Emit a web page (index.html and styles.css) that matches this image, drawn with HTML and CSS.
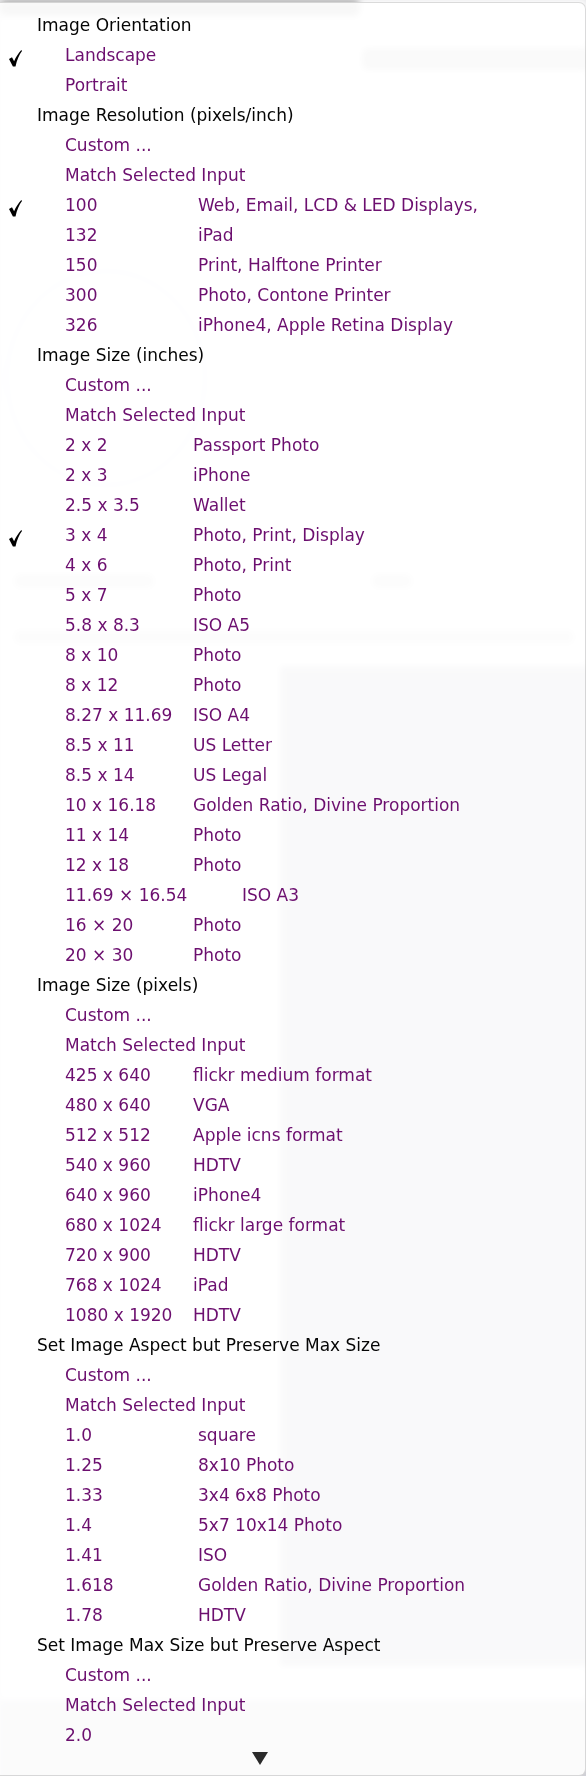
FILE: index.html
```html
<!DOCTYPE html>
<html lang="en">
<head>
    <meta charset="UTF-8" />
    <title>Image Size Menu</title>
    <link rel="stylesheet" href="styles.css">
</head>
<body>
    <!-- blurred window behind the menu -->
    <div class="backdrop">
        <div class="blob blob-bar"></div>
        <div class="blob blob-title"></div>
        <div class="ghost-circle"></div>
        <div class="ghost-button"></div>
        <div class="blob blob-back"></div>
        <div class="blob blob-fade"></div>
        <div class="blob blob-format"></div>
        <div class="ghost-panel"></div>
        <div class="ghost-foot"></div>
    </div>

    <div class="menu">
        <div class="row head">Image Orientation</div>
        <div class="section">
            <div class="row item"><span class="mark"><svg class="check" viewBox="0 0 13 17"><path d="M0 9 L3 7.2 L5.1 11.2 C7 7 9.4 3 12.3 0 L13 1 C10.2 4.8 7.9 9.8 6.5 16.6 L3.9 16.6 Z"/></svg></span><span class="c1">Landscape</span></div>
            <div class="row item"><span class="mark"></span><span class="c1">Portrait</span></div>
        </div>

        <div class="row head">Image Resolution (pixels/inch)</div>
        <div class="section wide">
            <div class="row item"><span class="mark"></span><span class="c1">Custom ...</span></div>
            <div class="row item"><span class="mark"></span><span class="c1">Match Selected Input</span></div>
            <div class="row item"><span class="mark"><svg class="check" viewBox="0 0 13 17"><path d="M0 9 L3 7.2 L5.1 11.2 C7 7 9.4 3 12.3 0 L13 1 C10.2 4.8 7.9 9.8 6.5 16.6 L3.9 16.6 Z"/></svg></span><span class="c1">100</span><span class="c2">Web, Email, LCD &amp; LED Displays,</span></div>
            <div class="row item"><span class="mark"></span><span class="c1">132</span><span class="c2">iPad</span></div>
            <div class="row item"><span class="mark"></span><span class="c1">150</span><span class="c2">Print, Halftone Printer</span></div>
            <div class="row item"><span class="mark"></span><span class="c1">300</span><span class="c2">Photo, Contone Printer</span></div>
            <div class="row item"><span class="mark"></span><span class="c1">326</span><span class="c2">iPhone4, Apple Retina Display</span></div>
        </div>

        <div class="row head">Image Size (inches)</div>
        <div class="section">
            <div class="row item"><span class="mark"></span><span class="c1">Custom ...</span></div>
            <div class="row item"><span class="mark"></span><span class="c1">Match Selected Input</span></div>
            <div class="row item"><span class="mark"></span><span class="c1">2 x 2</span><span class="c2">Passport Photo</span></div>
            <div class="row item"><span class="mark"></span><span class="c1">2 x 3</span><span class="c2">iPhone</span></div>
            <div class="row item"><span class="mark"></span><span class="c1">2.5 x 3.5</span><span class="c2">Wallet</span></div>
            <div class="row item"><span class="mark"><svg class="check" viewBox="0 0 13 17"><path d="M0 9 L3 7.2 L5.1 11.2 C7 7 9.4 3 12.3 0 L13 1 C10.2 4.8 7.9 9.8 6.5 16.6 L3.9 16.6 Z"/></svg></span><span class="c1">3 x 4</span><span class="c2">Photo, Print, Display</span></div>
            <div class="row item"><span class="mark"></span><span class="c1">4 x 6</span><span class="c2">Photo, Print</span></div>
            <div class="row item"><span class="mark"></span><span class="c1">5 x 7</span><span class="c2">Photo</span></div>
            <div class="row item"><span class="mark"></span><span class="c1">5.8 x 8.3</span><span class="c2">ISO A5</span></div>
            <div class="row item"><span class="mark"></span><span class="c1">8 x 10</span><span class="c2">Photo</span></div>
            <div class="row item"><span class="mark"></span><span class="c1">8 x 12</span><span class="c2">Photo</span></div>
            <div class="row item"><span class="mark"></span><span class="c1">8.27 x 11.69</span><span class="c2">ISO A4</span></div>
            <div class="row item"><span class="mark"></span><span class="c1">8.5 x 11</span><span class="c2">US Letter</span></div>
            <div class="row item"><span class="mark"></span><span class="c1">8.5 x 14</span><span class="c2">US Legal</span></div>
            <div class="row item"><span class="mark"></span><span class="c1">10 x 16.18</span><span class="c2">Golden Ratio, Divine Proportion</span></div>
            <div class="row item"><span class="mark"></span><span class="c1">11 x 14</span><span class="c2">Photo</span></div>
            <div class="row item"><span class="mark"></span><span class="c1">12 x 18</span><span class="c2">Photo</span></div>
            <div class="row item long"><span class="mark"></span><span class="c1">11.69 × 16.54</span><span class="c2">ISO A3</span></div>
            <div class="row item"><span class="mark"></span><span class="c1">16 × 20</span><span class="c2">Photo</span></div>
            <div class="row item"><span class="mark"></span><span class="c1">20 × 30</span><span class="c2">Photo</span></div>
        </div>

        <div class="row head">Image Size (pixels)</div>
        <div class="section">
            <div class="row item"><span class="mark"></span><span class="c1">Custom ...</span></div>
            <div class="row item"><span class="mark"></span><span class="c1">Match Selected Input</span></div>
            <div class="row item"><span class="mark"></span><span class="c1">425 x 640</span><span class="c2">flickr medium format</span></div>
            <div class="row item"><span class="mark"></span><span class="c1">480 x 640</span><span class="c2">VGA</span></div>
            <div class="row item"><span class="mark"></span><span class="c1">512 x 512</span><span class="c2">Apple icns format</span></div>
            <div class="row item"><span class="mark"></span><span class="c1">540 x 960</span><span class="c2">HDTV</span></div>
            <div class="row item"><span class="mark"></span><span class="c1">640 x 960</span><span class="c2">iPhone4</span></div>
            <div class="row item"><span class="mark"></span><span class="c1">680 x 1024</span><span class="c2">flickr large format</span></div>
            <div class="row item"><span class="mark"></span><span class="c1">720 x 900</span><span class="c2">HDTV</span></div>
            <div class="row item"><span class="mark"></span><span class="c1">768 x 1024</span><span class="c2">iPad</span></div>
            <div class="row item"><span class="mark"></span><span class="c1">1080 x 1920</span><span class="c2">HDTV</span></div>
        </div>

        <div class="row head">Set Image Aspect but Preserve Max Size</div>
        <div class="section wide">
            <div class="row item"><span class="mark"></span><span class="c1">Custom ...</span></div>
            <div class="row item"><span class="mark"></span><span class="c1">Match Selected Input</span></div>
            <div class="row item"><span class="mark"></span><span class="c1">1.0</span><span class="c2">square</span></div>
            <div class="row item"><span class="mark"></span><span class="c1">1.25</span><span class="c2">8x10 Photo</span></div>
            <div class="row item"><span class="mark"></span><span class="c1">1.33</span><span class="c2">3x4 6x8 Photo</span></div>
            <div class="row item"><span class="mark"></span><span class="c1">1.4</span><span class="c2">5x7 10x14 Photo</span></div>
            <div class="row item"><span class="mark"></span><span class="c1">1.41</span><span class="c2">ISO</span></div>
            <div class="row item"><span class="mark"></span><span class="c1">1.618</span><span class="c2">Golden Ratio, Divine Proportion</span></div>
            <div class="row item"><span class="mark"></span><span class="c1">1.78</span><span class="c2">HDTV</span></div>
        </div>

        <div class="row head">Set Image Max Size but Preserve Aspect</div>
        <div class="section">
            <div class="row item"><span class="mark"></span><span class="c1">Custom ...</span></div>
            <div class="row item"><span class="mark"></span><span class="c1">Match Selected Input</span></div>
            <div class="row item"><span class="mark"></span><span class="c1">2.0</span></div>
        </div>

        <div class="more">
            <svg class="arrow" viewBox="0 0 16 13"><polygon points="0,0 16,0 8,13"/></svg>
        </div>
    </div>
</body>
</html>
```

FILE: styles.css
```css
body {
    margin: 0;
    padding: 0;
    background-color: #e6e6e8;
    font-family: "DejaVu Sans", "Noto Sans", sans-serif;
    font-size: 17px;
    overflow: hidden;
}
.backdrop {
    position: fixed;
    top: 0;
    left: 0;
    width: 586px;
    height: 1776px;
    background-color: #fff;
    filter: blur(3px);
}
.blob {
    position: absolute;
    border-radius: 6px;
    background-color: #c2c2c2;
}
.blob-bar {
    top: 0;
    left: 0;
    width: 360px;
    height: 16px;
    background-color: #b0b0b0;
}
.blob-title {
    top: 48px;
    left: 362px;
    width: 230px;
    height: 22px;
    background-color: #c6c6c6;
}
.ghost-circle {
    position: absolute;
    top: 270px;
    left: 6px;
    width: 196px;
    height: 212px;
    border: 2px solid #d0d4ec;
    border-radius: 50%;
}
.ghost-button {
    position: absolute;
    top: 165px;
    left: 390px;
    width: 80px;
    height: 26px;
    border: 1px solid #c8c8c8;
    border-radius: 5px;
}
.blob-back {
    top: 574px;
    left: 14px;
    width: 140px;
    height: 14px;
    background-color: #dadada;
}
.blob-fade {
    top: 574px;
    left: 372px;
    width: 40px;
    height: 14px;
    background-color: #dadada;
}
.blob-format {
    top: 630px;
    left: 14px;
    width: 560px;
    height: 14px;
    background-color: #dedede;
}
.ghost-panel {
    position: absolute;
    top: 666px;
    left: 280px;
    width: 320px;
    height: 1000px;
    background-color: #c4c4cc;
}
.ghost-foot {
    position: absolute;
    top: 1700px;
    left: 0;
    width: 600px;
    height: 90px;
    background-color: #d0d0d6;
}
.menu {
    position: relative;
    margin-top: 2px;
    height: 1774px;
    box-sizing: border-box;
    padding-top: 7px;
    background-color: rgba(255, 255, 255, 0.9);
    border: 1px solid rgba(0, 0, 0, 0.14);
    border-left: none;
    border-radius: 0 7px 7px 0;
}
.row {
    height: 30px;
    line-height: 30px;
    white-space: nowrap;
}
.head {
    padding-left: 37px;
    color: #050505;
}
.item {
    display: flex;
    color: #6c0f6f;
}
.mark {
    flex: none;
    width: 65px;
}
.check {
    display: block;
    width: 13px;
    height: 17px;
    margin: 10px 0 0 9px;
    fill: #000;
}
.c1 {
    flex: none;
    width: 128px;
}
.wide .c1 {
    width: 133px;
}
.item.long .c1 {
    width: 177px;
}
.more {
    display: flex;
    justify-content: center;
    padding-top: 2px;
    padding-right: 66px;
}
.arrow {
    width: 16px;
    height: 13px;
    fill: #2a2a2a;
}
```
